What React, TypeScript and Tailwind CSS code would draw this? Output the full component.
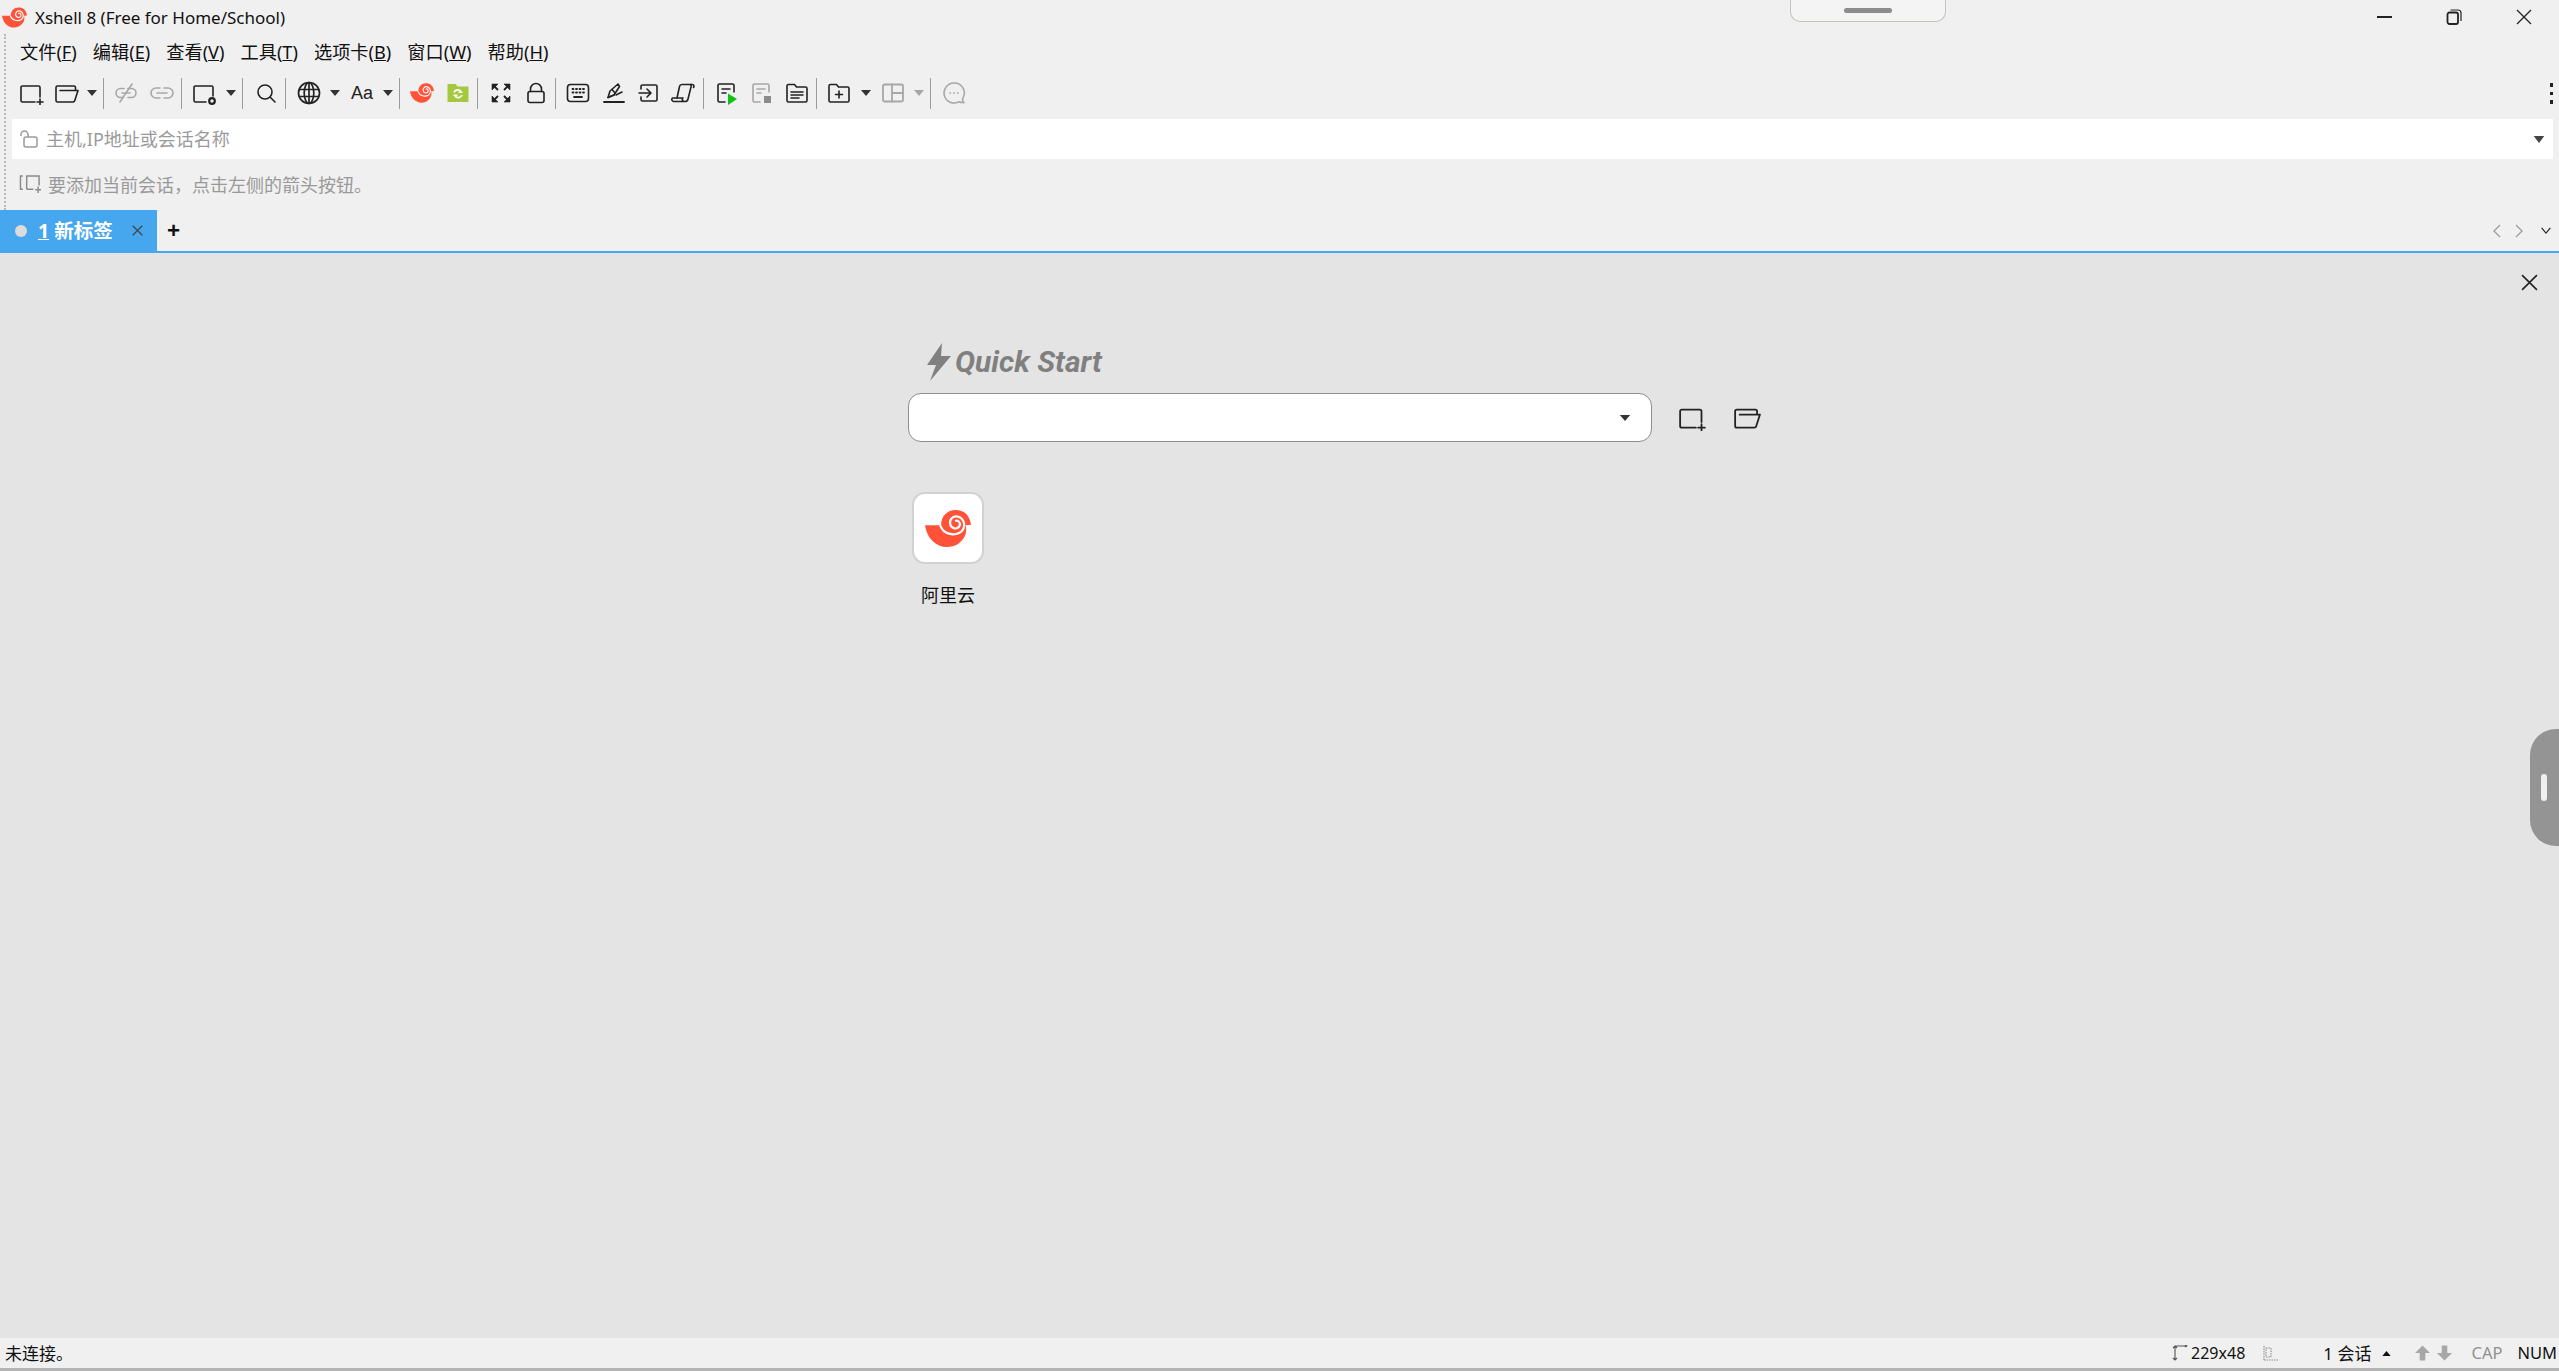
import React from "react";

const S = "#222222";
const G = "#a6a8a8";

function Snail({ className }: { className: string }) {
  return (
    <svg viewBox="0 0 137 110" className={className}>
      <path
        d="M0 45 L48 45 C48 18 66 0 92 0 C115 0 133 14 137 44 L121 45 C125 60 122 76 112 88 C100 104 84 110 66 110 C32 110 6 84 0 45 Z"
        fill="#ff5238"
      />
      <path
        d="M46 47 C54 70 86 80 106 66 C122 54 120 28 100 20 C84 15 72 28 75 42 C78 56 96 60 103 47 C107 38 99 30 92 32"
        fill="none"
        stroke="#ffffff"
        strokeWidth="6.500"
        strokeLinecap="round"
      />
    </svg>
  );
}

function I({ children, c = S, w = 1.6, cls = "h-6 w-6" }: { children: React.ReactNode; c?: string; w?: number; cls?: string }) {
  return (
    <svg viewBox="0 0 24 24" className={cls} fill="none" stroke={c} strokeWidth={w} strokeLinecap="round" strokeLinejoin="round">
      {children}
    </svg>
  );
}

const NewSession = ({ cls }: { cls?: string }) => (
  <I cls={cls}>
    <path d="M15 21H2.500A1.500 1.500 0 0 1 1 19.500V6.500A1.500 1.500 0 0 1 2.500 5h16A1.500 1.500 0 0 1 20 6.500V16" />
    <path d="M20 18v6M17 21h6" />
  </I>
);
const Folder = ({ cls }: { cls?: string }) => (
  <I cls={cls}>
    <path d="M20.500 9V6.500A1.500 1.500 0 0 0 19 5H2.500A1.500 1.500 0 0 0 1 6.500v13A1.500 1.500 0 0 0 2.500 21h15.500a2 2 0 0 0 1.800-1.500L23 9.500H5" />
  </I>
);
const Unlink = () => (
  <I c={G}>
    <path d="M10 7.500H6.500a4.500 4.500 0 0 0 0 9H9M14 7.500h3.500a4.500 4.500 0 0 1 0 9H14M8 12h8" />
    <path d="M6 21 18 3" />
  </I>
);
const Link = () => (
  <I c={G}>
    <path d="M10 7H6a5 5 0 0 0 0 10h4M14 7h4a5 5 0 0 1 0 10h-4M7 12h10" />
  </I>
);
const SessionGear = () => (
  <I>
    <path d="M13 21H2.500A1.500 1.500 0 0 1 1 19.500V6.500A1.500 1.500 0 0 1 2.500 5h16A1.500 1.500 0 0 1 20 6.500V15" />
    <circle cx="19" cy="20" r="2.800" strokeWidth="2.200" />
  </I>
);
const Search = () => (
  <I>
    <circle cx="11" cy="11" r="7" />
    <path d="m16 16 5 5" />
  </I>
);
const Globe = () => (
  <I w={1.7}>
    <circle cx="12" cy="12" r="10.500" />
    <ellipse cx="12" cy="12" rx="4.800" ry="10.500" />
    <path d="M2.500 8.500h19M2.500 15.500h19M12 2v20" />
  </I>
);
const Xftp = () => (
  <svg viewBox="0 0 24 24" className="h-6 w-6">
    <path d="M1.500 3h8l2 2.500h11V21h-21z" fill="#a2c93f" />
    <path d="M8 11.500a4 4 0 0 1 7-1M16 14a4 4 0 0 1-7 1M12.500 11.200h4M7.500 14.200h4" fill="none" stroke="#ffffff" strokeWidth="1.600" />
  </svg>
);
const Expand = () => (
  <svg viewBox="0 0 24 24" className="h-6 w-6" fill="none" stroke={S} strokeWidth="1.800">
    <path d="M4 4l5 5M20 4l-5 5M4 20l5-5M20 20l-5-5" />
    <path d="M3 3h6L3 9zM21 3h-6l6 6zM3 21h6l-6-6zM21 21h-6l6-6z" fill={S} strokeWidth="0.600" />
  </svg>
);
const Lock = () => (
  <I>
    <rect x="4" y="10.500" width="16" height="11" rx="2" />
    <path d="M6.500 10.500V8a5.500 5.500 0 0 1 11 0v2.500" />
  </I>
);
const Keyboard = () => (
  <I>
    <rect x="1.500" y="3.500" width="21" height="17" rx="3" />
    <path d="M6.500 8h1M10 8h1M13.500 8h1M17 8h1M6.500 11.500h1M10 11.500h1M13.500 11.500h1M17 11.500h1M8 16h8" strokeWidth="1.800" />
  </I>
);
const Pen = () => (
  <I>
    <path d="M6 16.500 8 10l8-7 1.500 2.500L12 14z" />
    <path d="M10 8.500 13 12M6 16.500 12 14M14 14l6-3" />
    <path d="M2 21h20" strokeWidth="1.800" />
  </I>
);
const Send = () => (
  <I>
    <path d="M4 8V5.500A1.500 1.500 0 0 1 5.500 4h13A1.500 1.500 0 0 1 20 5.500v13a1.500 1.500 0 0 1-1.500 1.500h-13A1.500 1.500 0 0 1 4 18.500V16" />
    <path d="M2 12h12M10 8l4 4-4 4" />
  </I>
);
const Script = () => (
  <I>
    <path d="M6 17 8.500 5.500A2.500 2.500 0 0 1 11 3.500h10.500a1.800 1.800 0 0 1 1 3" />
    <path d="M19.500 3.500a2.500 2.500 0 0 1 .5 2.500l-3 12a3 3 0 0 1-3 2.500H3a2 2 0 0 1-1.500-3.500H12a2 2 0 0 0 1 3.500" />
  </I>
);
const RunScript = () => (
  <svg viewBox="0 0 24 24" className="h-6 w-6" fill="none">
    <path d="M10 21H4.500A1.500 1.500 0 0 1 3 19.500V4.500A1.500 1.500 0 0 1 4.500 3h13A1.500 1.500 0 0 1 19 4.500V11M7 8h8M7 12h4" stroke={S} strokeWidth="1.600" strokeLinecap="round" />
    <path d="M13 12.500 22 18l-9 6z" fill="#12c012" />
  </svg>
);
const StopScript = () => (
  <svg viewBox="0 0 24 24" className="h-6 w-6" fill="none">
    <path d="M10 21H4.500A1.500 1.500 0 0 1 3 19.500V4.500A1.500 1.500 0 0 1 4.500 3h13A1.500 1.500 0 0 1 19 4.500V11M7 8h8M7 12h4" stroke={G} strokeWidth="1.600" strokeLinecap="round" />
    <rect x="14" y="15" width="7" height="7" fill="#8a8c8c" />
  </svg>
);
const ListFolder = () => (
  <I>
    <path d="M2 5A1.500 1.500 0 0 1 3.500 3.500h6l2 2.500h9A1.500 1.500 0 0 1 22 7.500v12a1.500 1.500 0 0 1-1.500 1.500h-17A1.500 1.500 0 0 1 2 19.500z" />
    <path d="M6 11h12M6 14h12M6 17h8" />
  </I>
);
const AddFolder = () => (
  <I>
    <path d="M2 5A1.500 1.500 0 0 1 3.500 3.500h6l2 2.500h9A1.500 1.500 0 0 1 22 7.500v12a1.500 1.500 0 0 1-1.500 1.500h-17A1.500 1.500 0 0 1 2 19.500z" />
    <path d="M12 10v7M8.500 13.500h7" />
  </I>
);
const Layout = () => (
  <I c={G} w={1.8}>
    <rect x="2" y="3.500" width="20" height="17" rx="1.500" />
    <path d="M11 3.500v17M11 12h11" />
  </I>
);
const Chat = () => (
  <I c={G}>
    <path d="M12 2a10 10 0 1 0 5 18.700c1 .8 3 1 5 1-1-1-1.500-2.500-1.500-4A10 10 0 0 0 12 2z" />
    <path d="M8 12h.5M11.700 12h.5M15.500 12h.5" />
  </I>
);

const Arrow = ({ c = "#333333" }: { c?: string }) => (
  <svg viewBox="0 0 10 6" className="h-[6px] w-[10px]">
    <path d="M0 0h10L5 6z" fill={c} />
  </svg>
);
const Sep = ({ m }: { m: string }) => <div className={`h-[31px] w-px bg-[#9c9c9c] ${m}`} />;
const Cross = ({ className, w = 1.4, c = "#222222" }: { className: string; w?: number; c?: string }) => (
  <svg viewBox="0 0 16 16" className={className} fill="none" stroke={c} strokeWidth={w}>
    <path d="m1 1 14 14M15 1 1 15" />
  </svg>
);

const menus: [string, string][] = [
  ["文件", "F"],
  ["编辑", "E"],
  ["查看", "V"],
  ["工具", "T"],
  ["选项卡", "B"],
  ["窗口", "W"],
  ["帮助", "H"],
];

export default function App() {
  return (
    <div className="relative flex h-screen w-full flex-col overflow-hidden bg-[#f0f0f0] font-['Noto_Sans','Noto_Sans_CJK_SC',sans-serif] text-[#111111]">
      {/* title bar */}
      <div className="flex h-[34px] shrink-0 items-center">
        <Snail className="ml-[2px] h-[21px] w-[25px]" />
        <span className="ml-[8px] mt-[1px] text-[17px] leading-none">Xshell 8 (Free for Home/School)</span>
        <div className="ml-auto flex items-center">
          <div className="h-[2px] w-[15px] bg-[#222222]" />
          <svg viewBox="0 0 16 16" className="ml-[54px] h-[16px] w-[16px]" fill="none" stroke="#222222" strokeWidth="1.800">
            <rect x="1.500" y="3.500" width="10.500" height="11.500" rx="2" />
            <path d="M4.500 1H12a3 3 0 0 1 3 3v8" strokeWidth="1.200" />
          </svg>
          <Cross className="ml-[54px] h-[16px] w-[16px]" w={1.3} />
          <div className="w-[27px]" />
        </div>
      </div>

      {/* menu + toolbar + address + hint share the grip */}
      <div className="relative shrink-0">
        <div className="absolute left-[4px] top-0 h-[176px] w-[3px] border-l-[2px] border-dotted border-[#b8b8b8]" />
        <div className="flex h-[36px] items-center gap-[16px] pl-[20px] text-[18.200px] leading-none">
          {menus.map(([a, b]) => (
            <span key={b}>
              {a}(<u>{b}</u>)
            </span>
          ))}
        </div>

        {/* toolbar */}
        <div className="flex h-[49px] items-center pl-[20px] pb-[3px]">
          <NewSession />
          <div className="ml-[11px]"><Folder /></div>
          <div className="ml-[8px]"><Arrow /></div>
          <Sep m="ml-[6px]" />
          <div className="ml-[10px]"><Unlink /></div>
          <div className="ml-[12px]"><Link /></div>
          <Sep m="ml-[7px]" />
          <div className="ml-[11px]"><SessionGear /></div>
          <div className="ml-[9px]"><Arrow /></div>
          <Sep m="ml-[6px]" />
          <div className="ml-[11px]"><Search /></div>
          <Sep m="ml-[7px]" />
          <div className="ml-[11px]"><Globe /></div>
          <div className="ml-[9px]"><Arrow /></div>
          <div className="ml-[10px] w-6 text-center font-['Liberation_Sans',sans-serif] text-[18px] leading-none text-[#222222]">Aa</div>
          <div className="ml-[9px]"><Arrow /></div>
          <Sep m="ml-[6px]" />
          <div className="ml-[10px]"><Snail className="h-[20px] w-[24px]" /></div>
          <div className="ml-[12px]"><Xftp /></div>
          <Sep m="ml-[7px]" />
          <div className="ml-[11px]"><Expand /></div>
          <div className="ml-[11px]"><Lock /></div>
          <Sep m="ml-[7px]" />
          <div className="ml-[10px]"><Keyboard /></div>
          <div className="ml-[12px]"><Pen /></div>
          <div className="ml-[11px]"><Send /></div>
          <div className="ml-[10px]"><Script /></div>
          <Sep m="ml-[8px]" />
          <div className="ml-[11px]"><RunScript /></div>
          <div className="ml-[11px]"><StopScript /></div>
          <div className="ml-[11px]"><ListFolder /></div>
          <Sep m="ml-[7px]" />
          <div className="ml-[10px]"><AddFolder /></div>
          <div className="ml-[10px]"><Arrow /></div>
          <div className="ml-[10px]"><Layout /></div>
          <div className="ml-[9px]"><Arrow c="#a6a8a8" /></div>
          <Sep m="ml-[6px]" />
          <div className="ml-[11px]"><Chat /></div>
          <div className="ml-auto mr-[6px] flex flex-col gap-[5px]">
            <div className="h-[4px] w-[3px] bg-[#222222]" />
            <div className="h-[3px] w-[3px] bg-[#222222]" />
            <div className="h-[4px] w-[3px] bg-[#222222]" />
          </div>
        </div>

        {/* address */}
        <div className="ml-[12px] mr-[6px] flex h-[40px] items-center bg-white pl-[8px] pr-[8px]">
          <svg viewBox="0 0 18 18" className="h-[18px] w-[18px]" fill="none" stroke="#9a9a9a" strokeWidth="1.500">
            <rect x="4" y="7" width="13" height="10" rx="2" />
            <path d="M1 6V4.500a3.500 3.500 0 0 1 7 0V7" />
          </svg>
          <span className="ml-[8px] text-[18px] leading-none text-[#9a9a9a]">主机,IP地址或会话名称</span>
          <svg viewBox="0 0 12 8" className="ml-auto h-[7px] w-[12px]">
            <path d="M0 0h12L6 8z" fill="#444444" />
          </svg>
        </div>

        {/* hint */}
        <div className="flex h-[51px] items-center pl-[19px]">
          <svg viewBox="0 0 24 22" className="h-[21px] w-[23px]" fill="none" stroke="#8a8a8a" strokeWidth="1.500">
            <path d="M4 2H1.500v14H4M8 16V2h13v10M8 16h7M20 13v7M17 16.500h6" />
          </svg>
          <span className="ml-[6px] text-[18px] leading-none text-[#999999]">要添加当前会话，点击左侧的箭头按钮。</span>
        </div>
      </div>

      {/* tabs */}
      <div className="flex h-[41px] shrink-0 items-center">
        <div className="flex h-[41px] w-[157px] items-center bg-[#46a6ee] pl-[15px]">
          <div className="h-[12px] w-[12px] rounded-full bg-[#dcdcdc]" />
          <span className="ml-[11px] text-[19.500px] font-bold leading-none text-white">
            <u>1</u> 新标签
          </span>
          <Cross className="ml-auto mr-[14px] h-[11px] w-[11px]" w={1.800} c="#444444" />
        </div>
        <span className="ml-[10px] text-[23px] font-bold leading-none text-[#111111]">+</span>
        <div className="ml-auto flex items-center pr-[7px]">
          <svg viewBox="0 0 8 14" className="h-[14px] w-[8px]" fill="none" stroke="#999999" strokeWidth="1.200">
            <path d="M7 1 1 7l6 6" />
          </svg>
          <svg viewBox="0 0 8 14" className="ml-[14px] h-[14px] w-[8px]" fill="none" stroke="#999999" strokeWidth="1.200">
            <path d="m1 1 6 6-6 6" />
          </svg>
          <svg viewBox="0 0 12 8" className="ml-[17px] h-[7px] w-[12px]" fill="none" stroke="#222222" strokeWidth="1.300">
            <path d="m1 1 5 6 5-6" />
          </svg>
        </div>
      </div>
      <div className="h-[2px] shrink-0 bg-[#46a6ee]" />

      {/* content */}
      <div className="flex min-h-0 flex-1 flex-col bg-[#e4e4e4]">
        <div className="flex justify-end pr-[21px] pt-[21px]">
          <Cross className="h-[17px] w-[17px]" w={1.500} />
        </div>
        <div className="ml-[908px] mt-[52px] flex items-center pl-[19px]">
          <svg viewBox="0 0 24 38" className="h-[38px] w-[24px]">
            <path d="M15 0 0 22h9L3 38l21-25h-10z" fill="#808080" />
          </svg>
          <span className="ml-[4px] font-['Roboto',sans-serif] text-[30px] font-bold italic leading-none text-[#808080]">Quick Start</span>
        </div>
        <div className="ml-[908px] mt-[12px] flex items-center">
          <div className="flex h-[49px] w-[744px] items-center justify-end rounded-[13px] border border-[#8e8e8e] bg-white pr-[20px]">
            <svg viewBox="0 0 12 7" className="h-[6px] w-[12px]">
              <path d="M0 0h12L6 7z" fill="#333333" />
            </svg>
          </div>
          <div className="ml-[27px]"><NewSession cls="h-[27px] w-[27px]" /></div>
          <div className="ml-[28px]"><Folder cls="h-[27px] w-[27px]" /></div>
        </div>
        <div className="ml-[912px] mt-[50px] flex w-[72px] flex-col items-center">
          <div className="flex h-[72px] w-[72px] items-center justify-center rounded-[13px] border-[2px] border-[#d2d2d2] bg-white">
            <Snail className="h-[37px] w-[46px]" />
          </div>
          <span className="mt-[22px] whitespace-nowrap text-[18px] leading-none text-[#111111]">阿里云</span>
        </div>
      </div>

      {/* status bar */}
      <div className="flex h-[30px] shrink-0 items-center text-[17px] leading-none">
        <span className="ml-[5px]">未连接。</span>
        <div className="ml-auto flex items-center">
          <svg viewBox="0 0 16 16" className="h-[16px] w-[16px]" fill="none" stroke="#555555" strokeWidth="1.100">
            <path d="M3 1v14M1 3l2-2 2 2M1 13l2 2 2-2M3 1h12M13 0l2 1-2 1" />
          </svg>
          <span className="ml-[3px] text-[16px]">229x48</span>
          <svg viewBox="0 0 16 16" className="ml-[18px] h-[16px] w-[16px]" fill="none" stroke="#8a8a8a" strokeWidth="1.100">
            <path d="M1 1v14M3 3h5v9H3zM1 15h14" strokeDasharray="1.500 1" />
          </svg>
          <span className="ml-[44px]">1 会话</span>
          <svg viewBox="0 0 10 6" className="ml-[11px] h-[5px] w-[9px]">
            <path d="M0 6h10L5 0z" fill="#111111" />
          </svg>
          <svg viewBox="0 0 16 16" className="ml-[24px] h-[16px] w-[15px]">
            <path d="M8 0 16 8h-5v8H5V8H0z" fill="#a6a8a8" />
          </svg>
          <svg viewBox="0 0 16 16" className="ml-[7px] h-[16px] w-[15px]">
            <path d="M8 16 16 8h-5V0H5v8H0z" fill="#a6a8a8" />
          </svg>
          <span className="ml-[19px] text-[16.500px] text-[#909090]">CAP</span>
          <span className="ml-[15px] mr-[2px] text-[16.500px]">NUM</span>
        </div>
      </div>
      <div className="h-[3px] shrink-0 bg-[#b4b4b4]" />

      {/* floating handles */}
      <div className="absolute left-[1790px] top-0 flex h-[22px] w-[156px] items-start justify-center rounded-b-[10px] border border-t-0 border-[#c4c4bc] bg-[#f4f4f4] pt-[8px]">
        <div className="h-[5px] w-[48px] rounded-full bg-[#8c8c8c]" />
      </div>
      <div className="absolute left-[2530px] top-[729px] flex h-[117px] w-[29px] items-center rounded-l-[26px] bg-[#949494] pl-[11px]">
        <div className="h-[27px] w-[6px] rounded-full bg-[#f0f0f0]" />
      </div>
    </div>
  );
}
